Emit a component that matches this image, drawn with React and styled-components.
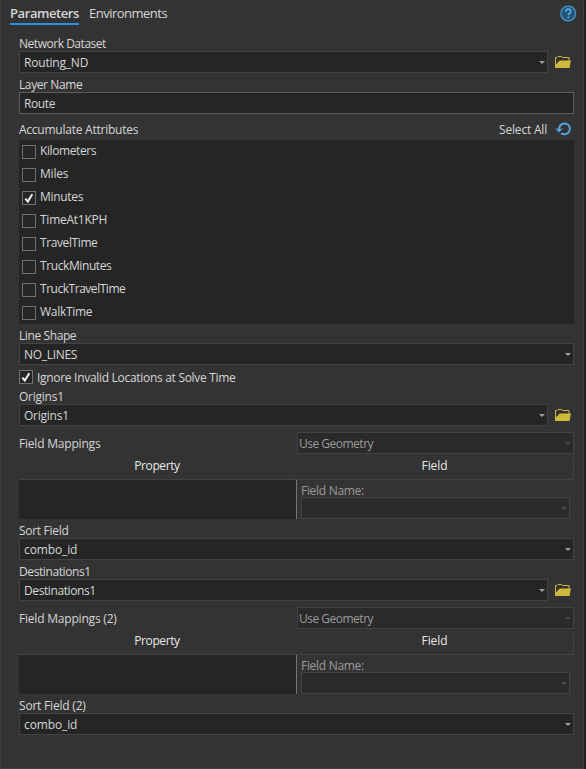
import React, { useState } from "react";
import styled, { createGlobalStyle } from "styled-components";

const GlobalStyle = createGlobalStyle`
  * {
    box-sizing: border-box;
  }

  body {
    margin: 0;
    background: #252526;
  }
`;

const Page = styled.div`
  width: 586px;
  height: 769px;
  overflow: hidden;
  background: #212123;
  font-family: "Open Sans", "Noto Sans", sans-serif;
  font-size: 12px;
  color: #d6d6d6;
`;

const Pane = styled.main`
  width: 584px;
  height: 769px;
  padding: 0 9px 0 18px;
  border: solid #3f3f46;
  border-width: 0 1px 1px;
  background: #333333;
`;

const Text = styled.span`
  white-space: nowrap;
  line-height: 16px;
  letter-spacing: ${({ $track = -0.3 }) => $track}px;
`;

const TabBar = styled.header`
  display: flex;
  align-items: flex-start;
  gap: 10px;
  height: 32px;
  margin: 0 -3px 0 -9px;
  padding-top: 5px;
`;

const Tab = styled.button`
  height: 20px;
  padding: 0;
  border: 0;
  border-bottom: 2px solid ${({ $active }) => ($active ? "#2b8fe6" : "transparent")};
  background: none;
  color: inherit;
  font: inherit;
  font-size: 13px;
  font-weight: ${({ $active }) => ($active ? 600 : 400)};
  line-height: 17px;
  display: flex;
  align-items: flex-start;
`;

const HelpButton = styled.button`
  width: 17px;
  height: 17px;
  margin-left: auto;
  padding: 0;
  border: 0;
  background: none;
  display: flex;
`;

const Label = styled.div`
  display: flex;
  align-items: center;
  height: 19px;
  padding-top: 4px;
`;

const ListHeader = styled.div`
  display: flex;
  align-items: center;
  height: 26px;
  padding-top: 6px;
`;

const LabelEnd = styled.div`
  display: flex;
  align-items: center;
  gap: 8px;
  margin-left: auto;
  padding-right: 3px;

  svg {
    margin-bottom: 2px;
  }
`;

const FieldRow = styled.div`
  display: flex;
  align-items: center;
  gap: 7px;
  width: 555px;
`;

const Box = styled.div`
  flex: 1;
  display: flex;
  align-items: center;
  justify-content: space-between;
  height: 22px;
  padding: 1px 2px 0 ${({ $disabled }) => ($disabled ? 1 : 4)}px;
  border: 1px solid ${({ $input }) => ($input ? "#5c5c5c" : "#434346")};
  background: ${({ $disabled }) => ($disabled ? "#2a2a2a" : "#252525")};
  color: ${({ $disabled }) => ($disabled ? "#9b9b9b" : "inherit")};
`;

const IconSlot = styled.span`
  display: flex;
  width: 19px;
  height: 22px;
  align-items: center;
`;

const AttributeList = styled.div`
  width: 555px;
  padding-left: 3px;
  background: #252525;
`;

const CheckRow = styled.div`
  display: flex;
  gap: 4px;
  height: ${({ $height }) => $height}px;
  padding-top: 5px;
`;

const CheckBox = styled.span`
  display: flex;
  flex: none;
  width: 14px;
  height: 14px;
  border: 1px solid #707070;
  background: #252525;
`;

const CheckText = styled(Text)`
  margin-top: ${({ $shift }) => $shift}px;
`;

const MappingTop = styled.div`
  display: grid;
  grid-template-columns: 278px 277px;
  align-items: center;
  width: 555px;
  margin-top: 6px;

  > ${Text} {
    padding-top: 2px;
  }
`;

const MappingHead = styled.div`
  display: grid;
  grid-template-columns: 277px 278px;
  width: 555px;
  height: 22px;
  margin-top: 4px;
  border-bottom: 1px solid #434346;
  color: #e8e8e8;
`;

const MappingCell = styled.div`
  display: flex;
  justify-content: center;
  border-right: 1px solid ${({ $faint }) => ($faint ? "#373737" : "#434346")};
`;

const MappingBody = styled.div`
  display: grid;
  grid-template-columns: 278px 277px;
  width: 555px;
  height: 39px;
`;

const PropertyArea = styled.div`
  border-right: 1px solid #777777;
  background: #252525;
`;

const FieldArea = styled.div`
  display: flex;
  flex-direction: column;
  padding: 1px 4px 0;
  color: #9b9b9b;

  > ${Text} {
    height: 16px;
    line-height: 19px;
  }

  ${Box} {
    flex: none;
  }
`;

const Arrow = ({ dim }) => (
  <svg width="6" height="3" viewBox="0 0 6 3">
    <path d="M0 0h6L3 3z" fill={dim ? "#4a4a4a" : "#a0a0a0"} />
  </svg>
);

const HelpIcon = () => (
  <svg width="17" height="17" viewBox="0 0 17 17" fill="none">
    <circle cx="8.2" cy="8.5" r="7.4" fill="#285174" stroke="#4299ce" strokeWidth="1.3" />
    <path
      d="M5.8 6.8c0-1.7 1-2.6 2.4-2.6s2.5.9 2.5 2.2c0 1.8-2.3 1.9-2.3 3.9"
      stroke="#4db0e8"
      strokeWidth="1.7"
    />
    <path d="M7.5 11.4h1.8v1.8H7.5z" fill="#4db0e8" />
  </svg>
);

const FolderIcon = () => (
  <svg width="16" height="13" viewBox="0 0 16 13">
    <path d="M.5 12V1.5H2l1-1h3.5l1 1H14V5" fill="none" stroke="#cfb93b" />
    <path d="M4.5 4.5H16L14.5 12H0V9l3.5-3z" fill="#cfb93b" />
  </svg>
);

const ResetIcon = () => (
  <svg width="16" height="14" viewBox="0 0 16 14" fill="none">
    <path
      d="M4 8C3.8 4 6.4 1.5 9.4 1.5c3.2 0 5.4 2.4 5.4 5.3 0 3.2-2.4 5.4-5.5 5.4-1.2 0-2.3-.4-3.1-1"
      stroke="#55a5dc"
      strokeWidth="2"
    />
    <path d="m0 6 4 4.6L8.2 6 4 7.5z" fill="#55a5dc" />
  </svg>
);

const Check = ({ checked }) => (
  <CheckBox>
    {checked && (
      <svg width="12" height="12" viewBox="0 0 12 12" fill="none">
        <path d="m2.3 6.6 2.5 2.9 4.5-7.3" stroke="#f1f1f1" strokeWidth="2" />
      </svg>
    )}
  </CheckBox>
);

const Select = ({ value, track, disabled }) => (
  <Box $disabled={disabled}>
    <Text $track={track}>{value}</Text>
    <Arrow dim={disabled} />
  </Box>
);

const BrowseField = ({ value, track }) => (
  <FieldRow>
    <Select value={value} track={track} />
    <IconSlot>
      <FolderIcon />
    </IconSlot>
  </FieldRow>
);

const FieldMappings = ({ title }) => (
  <>
    <MappingTop>
      <Text $track={-0.2}>{title}</Text>
      <Select value="Use Geometry" track={-0.5} disabled />
    </MappingTop>
    <MappingHead>
      <MappingCell $faint>
        <Text $track={-0.4}>Property</Text>
      </MappingCell>
      <MappingCell>
        <Text $track={-0.1}>Field</Text>
      </MappingCell>
    </MappingHead>
    <MappingBody>
      <PropertyArea />
      <FieldArea>
        <Text>Field Name:</Text>
        <Select value="" disabled />
      </FieldArea>
    </MappingBody>
  </>
);

const ATTRIBUTES = [
  { name: "Kilometers", track: -0.4 },
  { name: "Miles", track: -0.2 },
  { name: "Minutes", track: -0.3 },
  { name: "TimeAt1KPH", track: -0.25 },
  { name: "TravelTime", track: -0.4 },
  { name: "TruckMinutes", track: -0.4 },
  { name: "TruckTravelTime", track: -0.47 },
  { name: "WalkTime", track: -0.3 },
];

export default function App() {
  const [checked, setChecked] = useState(["Minutes"]);
  const [ignoreInvalid, setIgnoreInvalid] = useState(true);

  const toggle = (name) =>
    setChecked((prev) => (prev.includes(name) ? prev.filter((n) => n !== name) : [...prev, name]));

  return (
    <Page>
      <GlobalStyle />
      <Pane>
        <TabBar>
          <Tab $active>
            <Text $track={-0.42}>Parameters</Text>
          </Tab>
          <Tab>
            <Text $track={-0.5}>Environments</Text>
          </Tab>
          <HelpButton>
            <HelpIcon />
          </HelpButton>
        </TabBar>

        <Label>
          <Text $track={-0.47}>Network Dataset</Text>
        </Label>
        <BrowseField value="Routing_ND" track={-0.2} />

        <Label>
          <Text $track={-0.4}>Layer Name</Text>
        </Label>
        <FieldRow>
          <Box $input>
            <Text $track={-0.4}>Route</Text>
          </Box>
        </FieldRow>

        <ListHeader>
          <Text $track={-0.24}>Accumulate Attributes</Text>
          <LabelEnd>
            <Text $track={-0.2}>Select All</Text>
            <ResetIcon />
          </LabelEnd>
        </ListHeader>
        <AttributeList>
          {ATTRIBUTES.map(({ name, track }) => (
            <CheckRow key={name} $height={23} onClick={() => toggle(name)}>
              <Check checked={checked.includes(name)} />
              <CheckText $track={track} $shift={-2}>
                {name}
              </CheckText>
            </CheckRow>
          ))}
        </AttributeList>

        <Label>
          <Text $track={-0.4}>Line Shape</Text>
        </Label>
        <FieldRow>
          <Select value="NO_LINES" />
        </FieldRow>
        <CheckRow $height={20} onClick={() => setIgnoreInvalid(!ignoreInvalid)}>
          <Check checked={ignoreInvalid} />
          <CheckText $shift={0}>Ignore Invalid Locations at Solve Time</CheckText>
        </CheckRow>

        <Label>
          <Text $track={-0.25}>Origins1</Text>
        </Label>
        <BrowseField value="Origins1" track={-0.25} />
        <FieldMappings title="Field Mappings" />
        <Label>
          <Text>Sort Field</Text>
        </Label>
        <FieldRow>
          <Select value="combo_id" track={-0.12} />
        </FieldRow>

        <Label>
          <Text $track={-0.4}>Destinations1</Text>
        </Label>
        <BrowseField value="Destinations1" track={-0.4} />
        <FieldMappings title="Field Mappings (2)" />
        <Label>
          <Text $track={-0.2}>Sort Field (2)</Text>
        </Label>
        <FieldRow>
          <Select value="combo_id" track={-0.12} />
        </FieldRow>
      </Pane>
    </Page>
  );
}
